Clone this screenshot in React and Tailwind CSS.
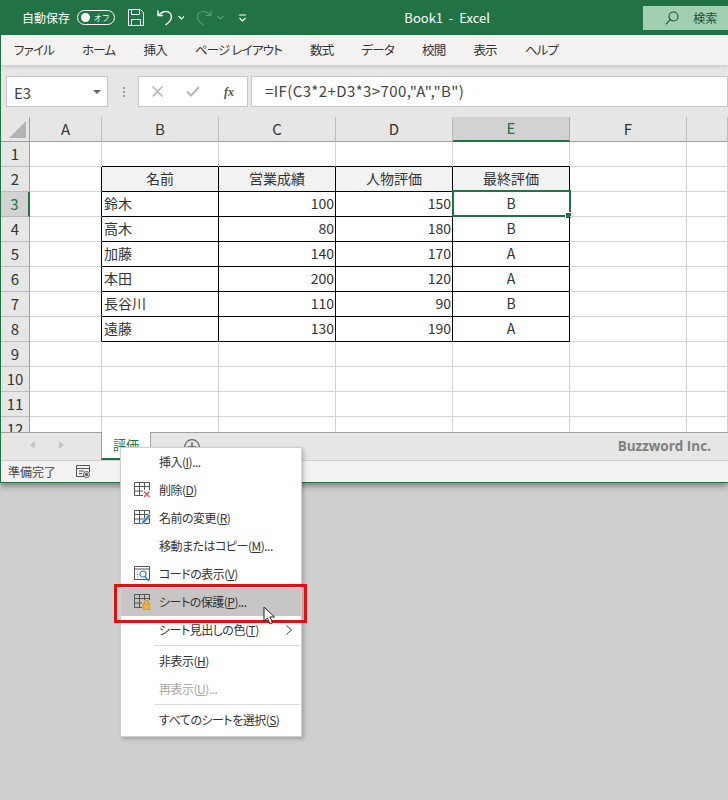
import React from "react";

const JP = 'font-["Noto_Sans_CJK_JP","Liberation_Sans",sans-serif]';

const columns = ["A", "B", "C", "D", "E", "F", "G"];

const rows = [
  { no: 1 },
  { no: 2, cells: ["名前", "営業成績", "人物評価", "最終評価"], head: true },
  { no: 3, cells: ["鈴木", "100", "150", "B"] },
  { no: 4, cells: ["高木", "80", "180", "B"] },
  { no: 5, cells: ["加藤", "140", "170", "A"] },
  { no: 6, cells: ["本田", "200", "120", "A"] },
  { no: 7, cells: ["長谷川", "110", "90", "B"] },
  { no: 8, cells: ["遠藤", "130", "190", "A"] },
  { no: 9 },
  { no: 10 },
  { no: 11 },
  { no: 12 },
];

const tabs = ["ファイル", "ホーム", "挿入", "ページ レイアウト", "数式", "データ", "校閲", "表示", "ヘルプ"];

function ColHeader({ name }) {
  const active = name === "E";
  return (
    <div
      className={
        active
          ? "flex items-center justify-center bg-[#d2d2d2] border-r border-[#ababab] border-b-2 border-b-[#217346] text-[15px] text-[#217346]"
          : "flex items-center justify-center bg-[#e6e6e6] border-r border-[#bdbdbd] border-b border-b-[#9f9f9f] text-[15px] text-[#333]"
      }
    >
      {name}
    </div>
  );
}

function RowHeader({ no }) {
  const active = no === 3;
  return (
    <div
      className={
        active
          ? "flex items-center justify-center bg-[#d2d2d2] border-r-2 border-r-[#217346] border-b border-[#b5b5b5] text-[15px] text-[#217346]"
          : "flex items-center justify-center bg-[#e6e6e6] border-r border-r-[#9f9f9f] border-b border-[#bdbdbd] text-[15px] text-[#333]"
      }
    >
      {no}
    </div>
  );
}

function Cell({ col, row }) {
  const inTable = row.no >= 2 && row.no <= 8 && col >= 1 && col <= 4;
  const text = inTable ? row.cells[col - 1] : "";
  const aboveTable = row.no === 1 && col >= 1 && col <= 4;
  const beforeTable = col === 0 && row.no >= 2 && row.no <= 8;
  let cls = "relative flex items-center pb-[2px] text-[14px] text-[#333] border-r border-b ";
  if (inTable) cls += "border-black ";
  else if (aboveTable) cls += "border-r-[#d4d4d4] border-b-black ";
  else if (beforeTable) cls += "border-r-black border-b-[#d4d4d4] ";
  else cls += "border-[#d4d4d4] ";
  if (row.head && inTable) cls += "bg-[#f2f2f2] justify-center ";
  else if (col === 4) cls += "justify-center ";
  else if (col === 1) cls += "pl-[2px] ";
  else cls += "justify-end pr-[1px] ";
  return (
    <div className={cls}>
      {text}
      {row.no === 3 && col === 4 && (
        <>
          <div className="absolute -left-px -top-[2px] -right-[2px] -bottom-px border-2 border-[#217346]" />
          <div className="absolute -right-[3px] -bottom-[3px] w-[7px] h-[7px] bg-[#217346] border border-white" />
        </>
      )}
    </div>
  );
}

function SheetGrid() {
  return (
    <div className="grid grid-cols-[29px_72px_117px_117px_117px_117px_117px_1fr] auto-rows-[25px] h-[315px] overflow-hidden bg-white">
      <div className="relative bg-[#e6e6e6] border-r border-r-[#9f9f9f] border-b border-b-[#9f9f9f]">
        <svg className="absolute right-[3px] bottom-[3px]" width="17" height="17" viewBox="0 0 17 17">
          <path d="M17 0v17H0z" fill="#b4b4b4" />
        </svg>
      </div>
      {columns.map((c) => (
        <ColHeader key={c} name={c === "G" ? "" : c} />
      ))}
      {rows.map((row) => (
        <React.Fragment key={row.no}>
          <RowHeader no={row.no} />
          {columns.map((c, i) => (
            <Cell key={c} col={i} row={row} />
          ))}
        </React.Fragment>
      ))}
    </div>
  );
}

function TitleBar() {
  return (
    <div className="flex items-center h-[35px] bg-[#217346] text-white pl-[21px]">
      <span className="text-[12px] w-[55px] [font-feature-settings:'palt']">自動保存</span>
      <div className="flex items-center justify-between w-[38px] h-[15px] rounded-full border border-white px-[3px]">
        <div className="w-[9px] h-[9px] rounded-full bg-white" />
        <span className="text-[8px] leading-none pr-[1px]">オフ</span>
      </div>
      <svg className="ml-[13px]" width="16" height="17" viewBox="0 0 16 17" fill="none" stroke="#fff" strokeWidth="1">
        <path d="M.5.5h12l3 3v13H.5z" />
        <path d="M3.5.5v5h8v-5M3.5 16.5v-6h9v6" />
      </svg>
      <svg className="ml-[13px]" width="16" height="17" viewBox="0 0 16 17" fill="none" stroke="#fff" strokeWidth="1.4">
        <path d="M1 1.5v5h5M1.5 6.5C4 3.5 6 2.5 9 2.500c3.500 0 5.500 2.500 5.500 5.500 0 3.500-3 6-6 8" />
      </svg>
      <svg className="ml-[5px]" width="7" height="5" viewBox="0 0 7 5" fill="none" stroke="#fff" strokeWidth="1.2">
        <path d="M.5 1l3 3 3-3" />
      </svg>
      <svg className="ml-[12px]" width="16" height="17" viewBox="0 0 16 17" fill="none" stroke="#5f9c7b" strokeWidth="1.2">
        <path d="M15 1.500v5h-5M14.500 6.500C12 3.500 10 2.500 7 2.500 3.500 2.500 1.500 5 1.500 8c0 3.500 3 6 6 8" />
      </svg>
      <svg className="ml-[5px]" width="7" height="5" viewBox="0 0 7 5" fill="none" stroke="#5f9c7b" strokeWidth="1.2">
        <path d="M.5 1l3 3 3-3" />
      </svg>
      <svg className="ml-[15px]" width="7" height="8" viewBox="0 0 7 8" fill="none" stroke="#fff" strokeWidth="1.2">
        <path d="M0 1h7M.5 4l3 3 3-3" />
      </svg>
      <span className="ml-[158px] text-[13px] whitespace-pre w-[240px]">Book1  -  Excel</span>
      <div className="flex items-center w-[85px] h-[24px] bg-[#a0cfb2] text-[#1e4f33] pl-[22px]">
        <svg width="14" height="14" viewBox="0 0 14 14" fill="none" stroke="#1e4f33" strokeWidth="1.1">
          <circle cx="8.500" cy="5.500" r="4.500" />
          <path d="M5.300 8.700L.8 13.300" />
        </svg>
        <span className="ml-[14px] text-[12px]">検索</span>
      </div>
    </div>
  );
}

function MenuTabs() {
  return (
    <div className="relative z-10 flex items-center gap-[28px] h-[30px] bg-[#f3f2f1] pl-[13px] text-[12.5px] tracking-[-0.8px] text-[#333] shadow-[0_2px_4px_rgba(0,0,0,0.12)] [font-feature-settings:'palt']">
      {tabs.map((t) => (
        <span key={t}>{t}</span>
      ))}
    </div>
  );
}

function FormulaBar() {
  return (
    <div className="flex items-center h-[52px] bg-[#e6e6e6] pl-[5px] pt-[1px]">
      <div className="flex items-center justify-between w-[102px] h-[31px] bg-white border border-[#c6c6c6] pl-[7px] pr-[6px] text-[15px] text-[#444]">
        <span className="mt-[3px]">E3</span>
        <svg width="8" height="4" viewBox="0 0 8 4">
          <path d="M0 0h8L4 4z" fill="#666" />
        </svg>
      </div>
      <div className="flex flex-col gap-[2px] ml-[15px] mr-[13px]">
        <div className="w-[2px] h-[2px] bg-[#9a9a9a]" />
        <div className="w-[2px] h-[2px] bg-[#9a9a9a]" />
        <div className="w-[2px] h-[2px] bg-[#9a9a9a]" />
      </div>
      <div className="flex items-center w-[110px] h-[31px] bg-white border border-[#c6c6c6] pl-[13px]">
        <svg width="11" height="11" viewBox="0 0 11 11" fill="none" stroke="#b5b5b5" strokeWidth="1.5">
          <path d="M.5.5l10 10M10.500.5l-10 10" />
        </svg>
        <svg className="ml-[23px]" width="14" height="11" viewBox="0 0 14 11" fill="none" stroke="#b5b5b5" strokeWidth="2">
          <path d="M1 5.500l4 4 8-8.500" />
        </svg>
        <span className="ml-[24px] font-['Liberation_Serif',serif] italic font-bold text-[12px] text-[#555]">fx</span>
      </div>
      <div className="flex items-center flex-1 h-[31px] ml-[3px] bg-white border border-[#c6c6c6] pl-[13px] text-[15px] text-[#444] tracking-[0.4px]">
        =IF(C3*2+D3*3&gt;700,"A","B")
      </div>
    </div>
  );
}

function SheetTabs() {
  return (
    <div className="flex h-[28px] bg-[#e6e6e6] border-t border-[#9f9f9f]">
      <div className="flex items-center w-[100px] pl-[29px] pb-[3px] gap-[24px]">
        <svg width="5" height="8" viewBox="0 0 5 8"><path d="M5 0v8L0 4z" fill="#c4c4c4" /></svg>
        <svg width="5" height="8" viewBox="0 0 5 8"><path d="M0 0v8l5-4z" fill="#c4c4c4" /></svg>
      </div>
      <div className="relative w-[50px] -mt-px bg-white border-x border-[#9f9f9f] border-b-2 border-b-[#217346] text-center text-[13px] text-[#217346] pt-[3px]">
        評価
      </div>
      <div className="flex items-start pl-[33px] pt-[6px]">
        <svg width="16" height="16" viewBox="0 0 16 16" fill="none" stroke="#666" strokeWidth="1.2">
          <circle cx="8" cy="8" r="7.300" />
          <path d="M8 3.500v9M3.500 8h9" strokeWidth="1.600" />
        </svg>
      </div>
      <div className="flex-1 flex items-center justify-end pr-[17px] font-['Open_Sans',sans-serif] font-bold text-[13.500px] text-[#808080]">
        Buzzword Inc.
      </div>
    </div>
  );
}

function StatusBar() {
  return (
    <div className="flex items-center h-[22px] bg-[#f3f2f1] border-t border-[#d0d0d0] pl-[7px] text-[12px] text-[#444]">
      <span>準備完了</span>
      <svg className="ml-[20px]" width="14" height="13" viewBox="0 0 14 13" fill="none" stroke="#555" strokeWidth="1">
        <path d="M8 11.500H.5V.5h13V7M.5 3.500h13M3 6h5M3 8.500h3" />
        <circle cx="10.500" cy="9.500" r="3" fill="#f3f2f1" />
        <circle cx="10.500" cy="9.500" r="1.200" fill="#555" />
      </svg>
    </div>
  );
}

function GridIcon({ children }) {
  return (
    <svg width="17" height="16" viewBox="0 0 17 16" fill="none">
      <path d="M.5.5h15v13H.5z M.5 4.500h15M.5 9h15M5.500.5v13M10.500.5v13" stroke="#555" strokeWidth="1" />
      {children}
    </svg>
  );
}

const iconDelete = (
  <GridIcon>
    <rect x="9" y="8" width="8" height="8" fill="#fff" />
    <path d="M10 9.500l5.500 5.500M15.500 9.500L10 15" stroke="#d9534f" strokeWidth="1.300" />
  </GridIcon>
);

const iconRename = (
  <GridIcon>
    <path d="M7 15l1-3.500 7-7.500 2 2-7 7.500z" fill="#2e86c9" stroke="#fff" strokeWidth=".6" />
  </GridIcon>
);

const iconCode = (
  <svg width="17" height="16" viewBox="0 0 17 16" fill="none">
    <path d="M.5.5h15v13H.5zM.5 3h15" stroke="#555" strokeWidth="1" />
    <path d="M3 6h1M3 8.500h1M3 11h1" stroke="#777" />
    <circle cx="9" cy="8" r="3" stroke="#2e86c9" strokeWidth="1.200" fill="#fff" />
    <path d="M11 10.500l4 4.500" stroke="#2e86c9" strokeWidth="1.500" />
  </svg>
);

const iconProtect = (
  <GridIcon>
    <rect x="8" y="6" width="9" height="10" fill="#c8c6c4" />
    <path d="M10.500 10V8.500a2 2 0 014 0V10" stroke="#c98a1e" strokeWidth="1.100" />
    <rect x="9" y="10" width="7" height="5.500" fill="#f0b13c" stroke="#c98a1e" strokeWidth=".6" />
  </GridIcon>
);

function MenuItem({ icon, children, active, disabled, arrow }) {
  return (
    <div
      className={`relative flex items-center h-[28px] pl-[13px] ${active ? "bg-[#c8c6c4]" : ""} ${
        disabled ? "text-[#a6a6a6]" : "text-[#333]"
      }`}
    >
      <div className="w-[25px] flex items-center">{icon}</div>
      <span>{children}</span>
      {arrow && (
        <svg className="absolute right-[9px] top-[9px]" width="6" height="10" viewBox="0 0 6 10" fill="none" stroke="#444" strokeWidth="1">
          <path d="M.5.5L5.500 5 .5 9.500" />
        </svg>
      )}
    </div>
  );
}

function Separator() {
  return <div className="ml-[33px] mr-[1px] h-px bg-[#dcdcdc] my-[1px]" />;
}

function ContextMenu() {
  return (
    <div className="absolute left-[120px] top-[447px] w-[182px] h-[290px] bg-white border border-[#cfcfcf] shadow-[2px_2px_4px_rgba(0,0,0,0.22)] text-[12px] tracking-[-0.5px] [font-feature-settings:'palt']">
      <MenuItem>挿入(<u>I</u>)...</MenuItem>
      <MenuItem icon={iconDelete}>削除(<u>D</u>)</MenuItem>
      <MenuItem icon={iconRename}>名前の変更(<u>R</u>)</MenuItem>
      <MenuItem>移動またはコピー(<u>M</u>)...</MenuItem>
      <MenuItem icon={iconCode}>コードの表示(<u>V</u>)</MenuItem>
      <MenuItem icon={iconProtect} active>シートの保護(<u>P</u>)...</MenuItem>
      <MenuItem arrow>シート見出しの色(<u>T</u>)</MenuItem>
      <Separator />
      <MenuItem>非表示(<u>H</u>)</MenuItem>
      <MenuItem disabled>再表示(<u>U</u>)...</MenuItem>
      <Separator />
      <MenuItem>すべてのシートを選択(<u>S</u>)</MenuItem>
    </div>
  );
}

function Pointer() {
  return (
    <svg className="absolute left-[263px] top-[606px]" width="14" height="20" viewBox="0 0 14 20">
      <path d="M1 1v14l3.500-3 2.500 6 2.500-1-2.500-6h4.500z" fill="#fff" stroke="#222" strokeWidth="1" />
    </svg>
  );
}

export default function App() {
  return (
    <div className={`relative w-[728px] h-[800px] overflow-hidden bg-[#cfcfcf] ${JP}`}>
      <div className="border-l border-b border-[#217346] shadow-[0_3px_6px_rgba(0,0,0,0.4)]">
        <TitleBar />
        <MenuTabs />
        <FormulaBar />
        <SheetGrid />
        <SheetTabs />
        <StatusBar />
      </div>
      <ContextMenu />
      <div className="absolute left-[114px] top-[584px] w-[193px] h-[39px] border-[3px] border-[#e01010]" />
      <Pointer />
    </div>
  );
}
